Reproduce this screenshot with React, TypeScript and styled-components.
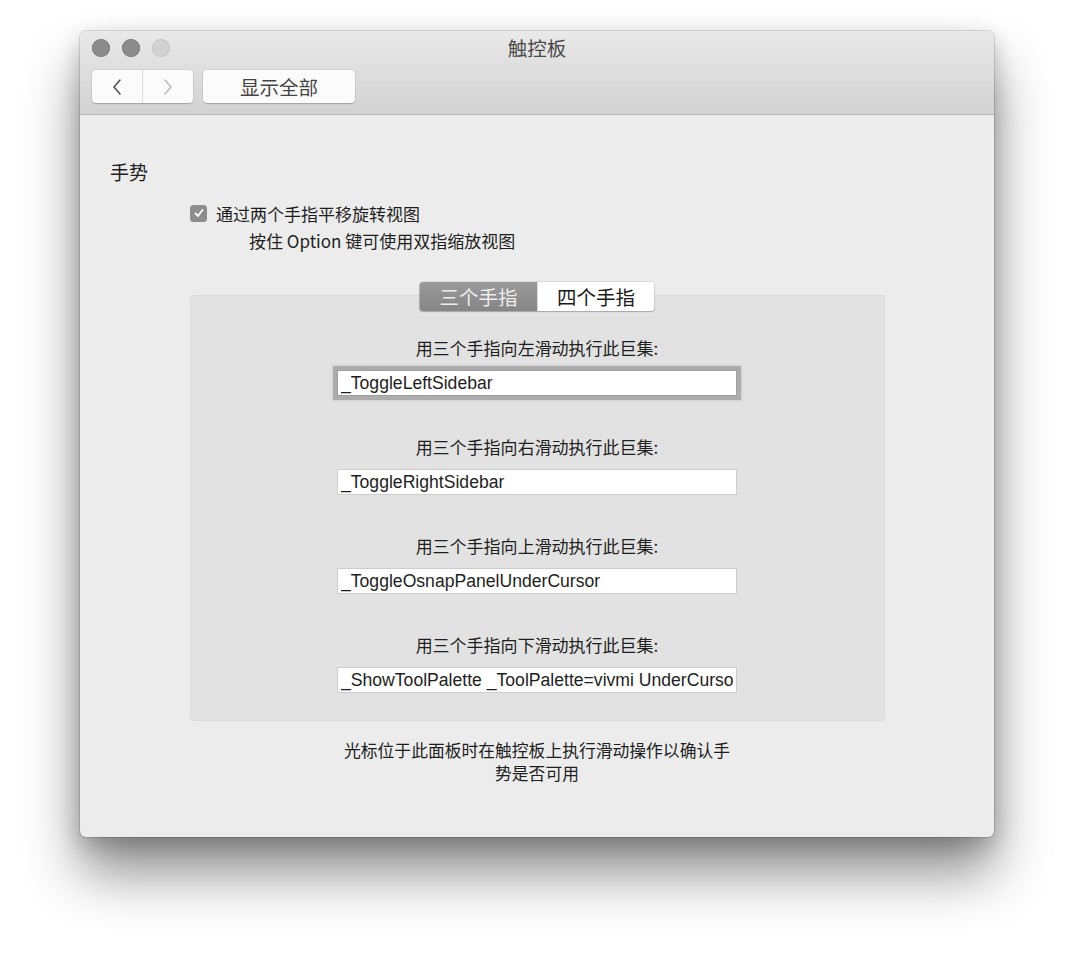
import React from 'react';
import styled, { createGlobalStyle } from 'styled-components';

const GlobalStyle = createGlobalStyle`
  html, body {
    margin: 0;
    padding: 0;
    background: #ffffff;
  }
  body {
    font-family: "Liberation Sans", "Noto Sans CJK SC", sans-serif;
    color: #222222;
  }
`;

const cjk = `"Noto Sans CJK SC", "Liberation Sans", sans-serif`;

const Page = styled.div`
  padding: 31px 0 0 80px;
  height: 953px;
  box-sizing: border-box;
  overflow: hidden;
`;

const Window = styled.div`
  width: 914px;
  height: 806px;
  border-radius: 6px;
  background: #ececec;
  overflow: hidden;
  box-shadow: 0 0 0 1px rgba(0, 0, 0, 0.12), 0 36px 55px rgba(0, 0, 0, 0.45),
    0 8px 22px rgba(0, 0, 0, 0.2);
`;

const TitleBar = styled.div`
  height: 84px;
  padding: 8px 12px 0;
  box-sizing: border-box;
  background: linear-gradient(#e9e9e9, #d2d2d2);
  border-bottom: 1px solid #b9b9b9;
`;

const TopRow = styled.div`
  display: grid;
  grid-template-columns: 1fr auto 1fr;
  align-items: center;
  height: 18px;
`;

const Lights = styled.div`
  display: flex;
  gap: 12px;
`;

const Light = styled.span<{ $off?: boolean }>`
  width: 18px;
  height: 18px;
  border-radius: 50%;
  background: ${(p) => (p.$off ? '#d2d2d2' : '#8c8c8c')};
  box-shadow: inset 0 0 0 1px ${(p) => (p.$off ? '#c6c6c6' : '#7e7e7e')};
`;

const Title = styled.div`
  font-family: ${cjk};
  font-size: 19.5px;
  line-height: 18px;
  color: #4a4a4a;
`;

const Toolbar = styled.div`
  display: flex;
  gap: 10px;
  margin-top: 13px;
`;

const NavGroup = styled.div`
  display: flex;
  width: 101px;
  height: 33px;
  background: #fbfbfb;
  border-radius: 4px;
  box-shadow: 0 0 0 0.5px rgba(0, 0, 0, 0.12), 0 1px 1px rgba(0, 0, 0, 0.18);
  overflow: hidden;
`;

const NavButton = styled.div<{ $divider?: boolean }>`
  flex: 1;
  display: flex;
  align-items: center;
  justify-content: center;
  border-right: ${(p) => (p.$divider ? '1px solid #dedede' : 'none')};
`;

const ToolButton = styled.div`
  width: 152px;
  height: 33px;
  display: flex;
  align-items: center;
  justify-content: center;
  background: #fbfbfb;
  border-radius: 4px;
  box-shadow: 0 0 0 0.5px rgba(0, 0, 0, 0.12), 0 1px 1px rgba(0, 0, 0, 0.18);
  font-family: ${cjk};
  font-size: 19.5px;
  color: #444444;
`;

const Body = styled.div`
  padding: 45px 30px 0;
`;

const Heading = styled.div`
  font-family: ${cjk};
  font-size: 19px;
  line-height: 24px;
  color: #1e1e1e;
`;

const CheckRow = styled.label`
  display: flex;
  align-items: center;
  gap: 9px;
  margin: 19px 0 0 80px;
  height: 20px;
  font-family: ${cjk};
  font-size: 17px;
  color: #1e1e1e;
`;

const Box = styled.span`
  width: 17px;
  height: 17px;
  border-radius: 3.5px;
  background: #8d8d8d;
  display: flex;
  align-items: center;
  justify-content: center;
`;

const Hint = styled.div`
  margin: 8px 0 0 139px;
  height: 20px;
  line-height: 20px;
  font-family: ${cjk};
  font-size: 17px;
  color: #1e1e1e;
`;

const Group = styled.div`
  position: relative;
  width: 695px;
  height: 426px;
  box-sizing: border-box;
  margin: 44px auto 0;
  padding: 41px 0 0;
  background: #e2e2e2;
  border: 1px solid #dadada;
  border-radius: 4px;
  display: flex;
  flex-direction: column;
  align-items: center;
  gap: 40px;
`;

const Segmented = styled.div`
  position: absolute;
  top: -14px;
  left: 50%;
  transform: translateX(-50%);
  display: flex;
  height: 29px;
  border-radius: 4px;
  overflow: hidden;
  box-shadow: 0 0 0 0.5px rgba(0, 0, 0, 0.15), 0 1px 1px rgba(0, 0, 0, 0.2);
`;

const Segment = styled.div<{ $active?: boolean }>`
  width: ${(p) => (p.$active ? 118 : 117)}px;
  display: flex;
  align-items: center;
  justify-content: center;
  font-family: ${cjk};
  font-size: 19.5px;
  color: ${(p) => (p.$active ? '#ececec' : '#1a1a1a')};
  background: ${(p) =>
    p.$active ? 'linear-gradient(#9a9a9a, #858585)' : '#ffffff'};
`;

const Field = styled.div`
  display: flex;
  flex-direction: column;
  align-items: center;
  gap: 11px;
`;

const FieldLabel = styled.div`
  height: 22px;
  line-height: 22px;
  font-family: ${cjk};
  font-size: 17px;
  color: #1e1e1e;
`;

const Input = styled.input<{ $focused?: boolean }>`
  width: 400px;
  height: 26px;
  box-sizing: border-box;
  margin: 0;
  padding: 0 3px;
  border: 1px solid ${(p) => (p.$focused ? '#9e9e9e' : '#cdcdcd')};
  background: #ffffff;
  outline: none;
  font-family: "Liberation Sans", sans-serif;
  font-size: 17.6px;
  color: #1e1e1e;
  box-shadow: ${(p) =>
    p.$focused ? '0 0 0 4px #acacac, 0 0 2px 5px rgba(0,0,0,0.08)' : 'none'};
`;

const Footer = styled.div`
  width: 398px;
  margin: 18px auto 0;
  text-align: center;
  font-family: ${cjk};
  font-size: 16.8px;
  line-height: 23px;
  color: #1e1e1e;
`;

const Chevron = ({ dir, color }: { dir: 'left' | 'right'; color: string }) => (
  <svg width="12" height="18" viewBox="0 0 12 18">
    <polyline
      points={dir === 'left' ? '9,2 3,9 9,16' : '3,2 9,9 3,16'}
      fill="none"
      stroke={color}
      strokeWidth="1.6"
      strokeLinecap="round"
      strokeLinejoin="round"
    />
  </svg>
);

const fields = [
  { dir: '左', value: '_ToggleLeftSidebar' },
  { dir: '右', value: '_ToggleRightSidebar' },
  { dir: '上', value: '_ToggleOsnapPanelUnderCursor' },
  { dir: '下', value: '_ShowToolPalette _ToolPalette=vivmi UnderCursor' },
];

const App = () => (
  <Page>
    <GlobalStyle />
    <Window>
      <TitleBar>
        <TopRow>
          <Lights>
            <Light />
            <Light />
            <Light $off />
          </Lights>
          <Title>触控板</Title>
          <span />
        </TopRow>
        <Toolbar>
          <NavGroup>
            <NavButton $divider>
              <Chevron dir="left" color="#555555" />
            </NavButton>
            <NavButton>
              <Chevron dir="right" color="#bdbdbd" />
            </NavButton>
          </NavGroup>
          <ToolButton>显示全部</ToolButton>
        </Toolbar>
      </TitleBar>
      <Body>
        <Heading>手势</Heading>
        <CheckRow>
          <Box>
            <svg width="12" height="12" viewBox="0 0 12 12">
              <polyline
                points="2.5,6.5 5,9 9.5,3"
                fill="none"
                stroke="#ffffff"
                strokeWidth="1.8"
                strokeLinecap="round"
                strokeLinejoin="round"
              />
            </svg>
          </Box>
          通过两个手指平移旋转视图
        </CheckRow>
        <Hint>按住 Option 键可使用双指缩放视图</Hint>
        <Group>
          <Segmented>
            <Segment $active>三个手指</Segment>
            <Segment>四个手指</Segment>
          </Segmented>
          {fields.map((f, i) => (
            <Field key={i}>
              <FieldLabel>用三个手指向{f.dir}滑动执行此巨集:</FieldLabel>
              <Input readOnly value={f.value} $focused={i === 0} />
            </Field>
          ))}
        </Group>
        <Footer>光标位于此面板时在触控板上执行滑动操作以确认手势是否可用</Footer>
      </Body>
    </Window>
  </Page>
);

export default App;
